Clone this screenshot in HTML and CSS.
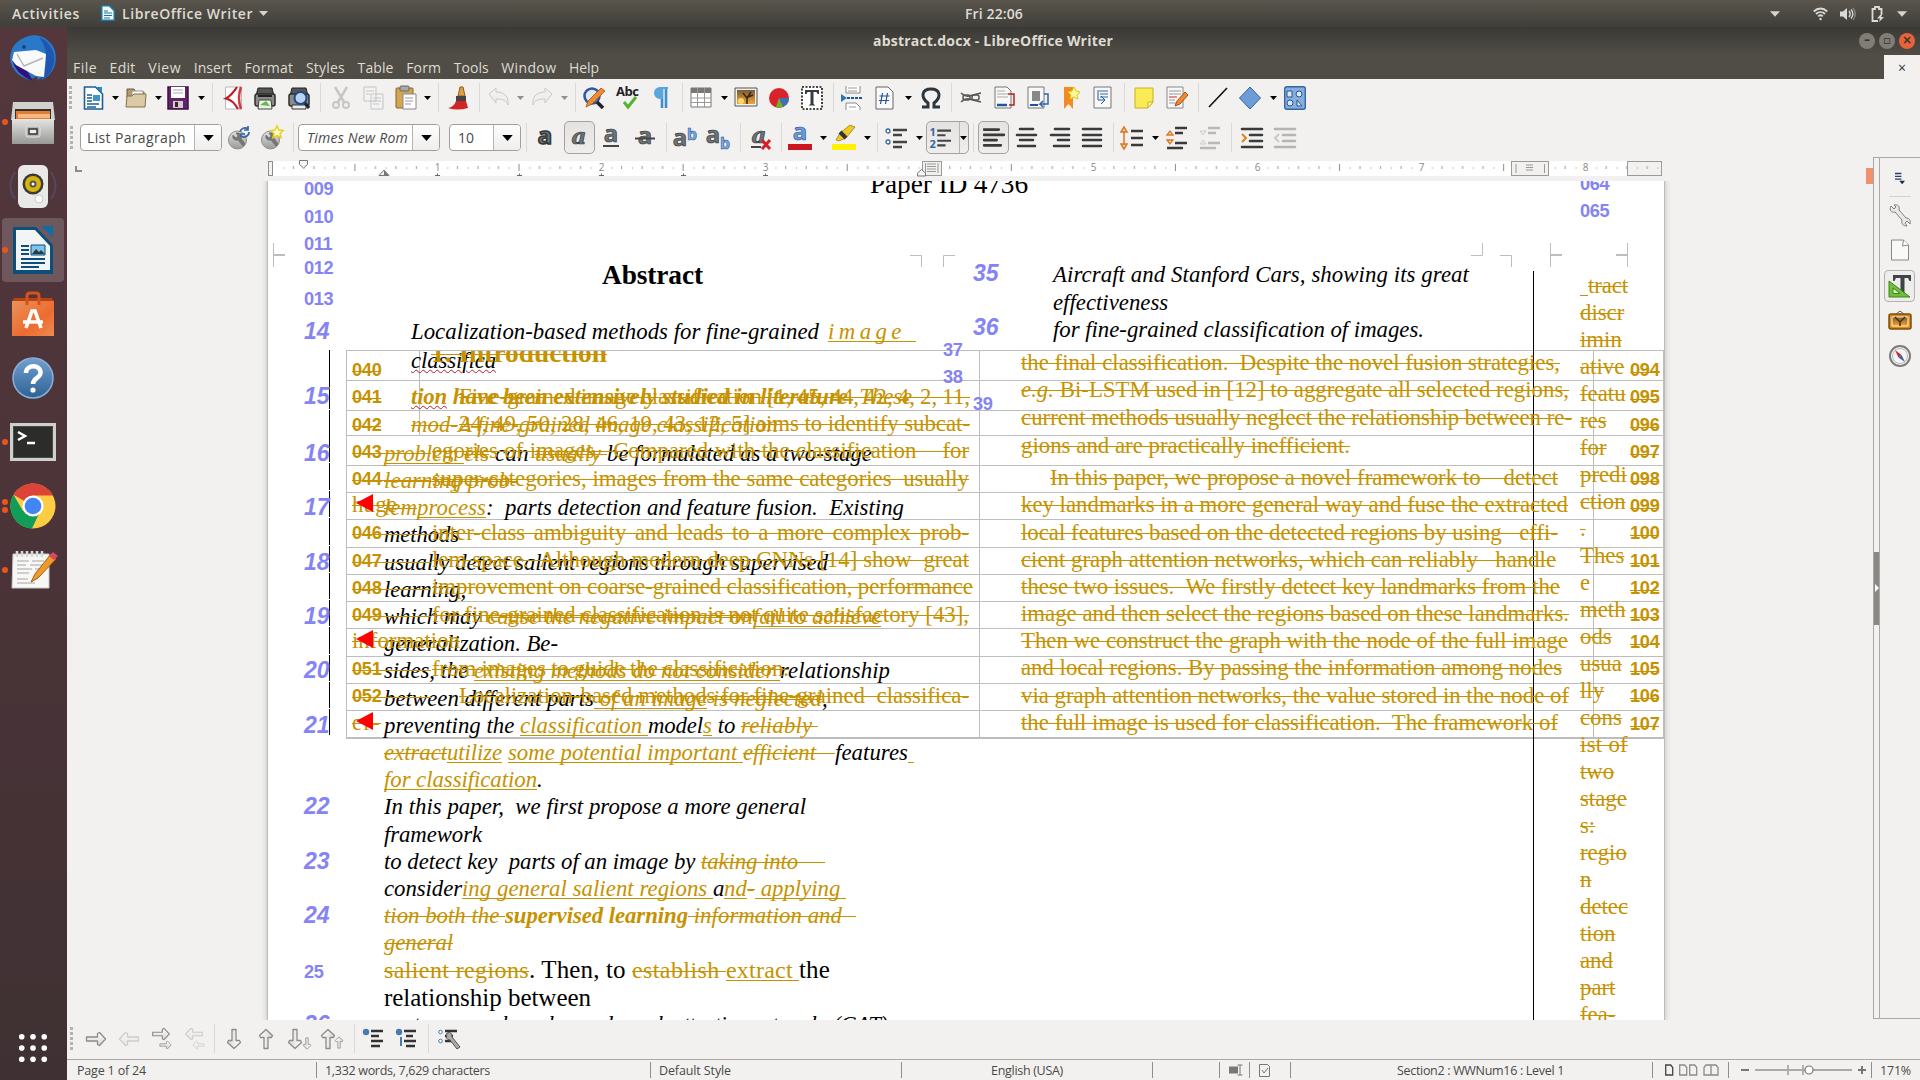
FILE: index.html
```html
<!DOCTYPE html>
<html lang="en">
<head>
<meta charset="utf-8">
<title>abstract.docx - LibreOffice Writer</title>
<link rel="stylesheet" href="styles.css">
</head>
<body>
<svg class="defs" width="0" height="0">
  <defs>
    <linearGradient id="silver" x1="0" y1="0" x2="0" y2="1"><stop offset="0" stop-color="#e4e4e2"/><stop offset="1" stop-color="#989896"/></linearGradient>
    <linearGradient id="blue" x1="0" y1="0" x2="0" y2="1"><stop offset="0" stop-color="#729fcf"/><stop offset="1" stop-color="#2d6296"/></linearGradient>
    <linearGradient id="orange" x1="0" y1="0" x2="1" y2="1"><stop offset="0" stop-color="#e8935c"/><stop offset=".6" stop-color="#ed6c2f"/><stop offset="1" stop-color="#ef8a52"/></linearGradient>
    <linearGradient id="sky" x1="0" y1="0" x2="0" y2="1"><stop offset="0" stop-color="#7a5a35"/><stop offset="1" stop-color="#f4a536"/></linearGradient>
    <linearGradient id="shaft" x1="0" y1="0" x2="0" y2="1"><stop offset="0" stop-color="#fff"/><stop offset="1" stop-color="#d5d5d2"/></linearGradient>
    <symbol id="dd" viewBox="0 0 7 4"><path d="M0 0h7L3.500 4z"/></symbol>
    <symbol id="right" viewBox="0 0 22 16"><path d="M1.500 6h11V2.500l2-1 6 6.500-6 6.500-2-1V10h-11z" fill="url(#shaft)" stroke="#8b8b89" stroke-width="1.300" stroke-linejoin="round"/></symbol>
    <symbol id="lines" viewBox="0 0 21 22"><path d="M1 3h14M1 8h19M1 13h12M1 18h16" stroke="#3a3a3a" stroke-width="2.600" stroke-linecap="round"/></symbol>
    <symbol id="stylebadge" viewBox="0 0 22 24"><circle cx="9.500" cy="14" r="9" fill="url(#silver)" stroke="#8d8d8b"/><path d="M5 9l3 3 2-2-2-3c4-1 6 2 5 5l4 6-2 2-5-6c-4 1-6-2-5-5z" fill="#777" stroke="#5c5c5c" stroke-width=".5"/></symbol>
  </defs>
</svg>

<header class="topbar">
  <span class="activities" data-w="68">Activities</span>
  <svg class="app-ico" viewBox="0 0 14 16"><path d="M0 0h9l5 5v11H0z" fill="#1579a8"/><path d="M1.500 1.500H8l4.500 4.500v8.500h-11z" fill="#f5f8fa"/><path d="M3 6h4M3 8h8M3 10.500h8M3 13h6" stroke="#1579a8" stroke-width="1.200"/></svg>
  <span class="app-name" data-w="131">LibreOffice Writer</span>
  <svg class="caret" viewBox="0 0 9 5"><path d="M0 0h9L4.500 5z" fill="#d6d4cf"/></svg>
  <span class="clock" data-w="58">Fri 22:06</span>
  <div class="tray">
    <svg width="10" height="6" viewBox="0 0 9 5"><path d="M0 0h9L4.500 5z" fill="#d6d4cf"/></svg>
    <svg class="wifi" width="15" height="14" viewBox="0 0 15 14" fill="none" stroke="#dcdad5" stroke-width="1.800"><path d="M.8 4.500c4-4 9.400-4 13.400 0M3 7c2.600-2.600 6.400-2.600 9 0M5.200 9.300c1.400-1.300 3.200-1.300 4.600 0"/><circle cx="7.500" cy="12" r="1.200" fill="#dcdad5" stroke="none"/></svg>
    <svg class="vol" width="16" height="14" viewBox="0 0 16 14"><path d="M0 4.500h3L7 1v12L3 9.500H0z" fill="#dcdad5"/><path d="M9 4c1.500 2 1.500 4 0 6M11 2.500c2.500 3 2.500 6 0 9" fill="none" stroke="#dcdad5" stroke-width="1.400"/><path d="M13 1c3 4 3 8 0 12" fill="none" stroke="#85827a" stroke-width="1.400"/></svg>
    <svg class="bat" width="14" height="16" viewBox="0 0 14 16"><path d="M7 15H1.500V3h2.500V1h4v2H10.500v5" fill="none" stroke="#dcdad5" stroke-width="1.800"/><path d="M10 8l-4 4.500h3L8 16l5-5h-3l1.500-3z" fill="#dcdad5"/></svg>
    <svg width="10" height="6" viewBox="0 0 9 5"><path d="M0 0h9L4.500 5z" fill="#d6d4cf"/></svg>
  </div>
</header>

<div class="desktop">
<nav class="dock">
  <div class="slot"><svg viewBox="0 0 48 48"><path d="M17 3C28-2 42 4 46 17c3 12-2 24-13 29l1-4-5 4-1-4-7 4c-8-2-15-7-18-14C-1 23 1 9 17 3z" fill="#2a78c8"/><path d="M30 3c13 5 19 20 13 32-2 5-6 9-12 11 7-8 10-30-1-43z" fill="#1f57b0"/><path d="M3 23c1 11 9 20 21 24l-8-14z" fill="#30127e"/><path d="M5 18l22-2 10 4-2 23-8-1-20-11-4-5z" fill="#fafafa"/><path d="M8 20l7 12 19-8" fill="none" stroke="#b6b6b6" stroke-width="1.400"/><circle cx="15" cy="13" r="1.800" fill="#123a63"/></svg></div>
  <div class="slot run"><svg viewBox="0 0 48 48"><path d="M4 4h40l2 18H2z" fill="#d0d0ce"/><path d="M6 11h36v10H6z" fill="#33302e"/><path d="M7 13h34v8H7z" fill="#e07d35"/><path d="M9 16h32v4H9z" fill="#f5b883"/><path d="M3 21h42v25H3z" fill="url(#silver)"/><rect x="17" y="28" width="14" height="11" rx="2" fill="#b6b6b4" stroke="#e5e5e3"/><rect x="20" y="31" width="8" height="5" fill="#eee" stroke="#333" stroke-width="1.500"/></svg></div>
  <div class="slot"><svg viewBox="0 0 48 48"><path d="M6 10Q-3 24 6 37M42 10q9 14 0 27" fill="none" stroke="#54485f" stroke-width="2"/><rect x="9" y="3" width="30" height="43" rx="6" fill="#e9e9e8"/><circle cx="24" cy="22" r="10.500" fill="#3c3b38"/><circle cx="24" cy="22" r="8" fill="#d7b50e"/><circle cx="24" cy="22" r="3.500" fill="#55544f"/><circle cx="24" cy="22" r="1.500" fill="#fff"/><circle cx="30" cy="37" r="4" fill="#fafafa" stroke="#ccc"/></svg></div>
  <div class="slot run active"><svg viewBox="0 0 48 48"><path d="M4 1h23l17 18v29H4z" fill="#0a5078"/><path d="M32 0h12v12z" fill="#0f6da3"/><path d="M7 4h19l15 16v24H7z" fill="#f3f4f5"/><path d="M12 20h8M12 24h8M12 28h8M12 33h24M12 37h24M12 41h18" stroke="#0c4f77" stroke-width="2.200"/><path d="M22 19h14v10H22z" fill="#7cc4ec" stroke="#0c4f77"/><path d="M23 28l4-5 3 3 2-2 4 4z" fill="#2c3c44"/></svg></div>
  <div class="slot"><svg viewBox="0 0 48 48"><path d="M5 8h38l2 4H3z" fill="#b8430f"/><path d="M3 11h42v35H3z" fill="url(#orange)"/><path d="M18 15V6q0-3 3-3h6q3 0 3 3v9" fill="none" stroke="#d8501d" stroke-width="3"/><path d="M17 38l6-17h3l6 17M14 32h20" stroke="#fff" stroke-width="3.600" fill="none"/></svg></div>
  <div class="slot"><svg viewBox="0 0 48 48"><circle cx="24" cy="24" r="20" fill="url(#blue)" stroke="#8ab0da" stroke-width="1.500"/><path d="M17 19c0-9 15-9 14.500 0C31.300 24 24 24 24 30" fill="none" stroke="#fff" stroke-width="4.500"/><circle cx="24" cy="36" r="2.600" fill="#fff"/></svg></div>
  <div class="slot run"><svg viewBox="0 0 48 48"><rect x="2.500" y="6.500" width="43" height="35" fill="#4a4a48" stroke="#cfcfcd" stroke-width="3"/><rect x="5" y="9" width="38" height="30" fill="#2c2c2a"/><path d="M9 14l7 4-7 4M18 25h8" stroke="#fff" stroke-width="2.500" fill="none"/></svg></div>
  <div class="slot run two"><svg viewBox="0 0 48 48"><circle cx="24" cy="24" r="22.500" fill="#fc4"/><path d="M24 24L4.500 12.700A22.500 22.500 0 0 1 44 13.500H24z" fill="#db4437"/><path d="M4.500 12.700A22.500 22.500 0 0 0 23 46.500l8-17L14 29z" fill="#0f9d58"/><circle cx="24" cy="24" r="10.500" fill="#fff"/><circle cx="24" cy="24" r="8.300" fill="#4285f4"/></svg></div>
  <div class="slot run"><svg viewBox="0 0 48 48"><path d="M4 8h36v34H3z" fill="#f7f7f6" stroke="#c8c8c6"/><path d="M8 5v6M13 5v6M18 5v6M23 5v6M28 5v6M33 5v6" stroke="#d9d9d9" stroke-width="2.500"/><path d="M8 15h12m3 0h12M8 19h9m4 0h14M8 23h15m3 0h8M8 27h12M8 33h11M8 37h18" stroke="#a6a6a4"/><path d="M22 36l4-8L42 8l5 5-18 19z" fill="#f09a2c" stroke="#a0601a"/><path d="M40 10l4-4 5 4-4 4z" fill="#d9485a"/></svg></div>
  <svg class="apps" viewBox="0 0 32 32" fill="#fff"><circle cx="4" cy="4" r="3"/><circle cx="16" cy="4" r="3"/><circle cx="28" cy="4" r="3"/><circle cx="4" cy="16" r="3"/><circle cx="16" cy="16" r="3"/><circle cx="28" cy="16" r="3"/><circle cx="4" cy="28" r="3"/><circle cx="16" cy="28" r="3"/><circle cx="28" cy="28" r="3"/></svg>
</nav>

<main class="window">
  <div class="titlebar">
    <span data-w="240">abstract.docx - LibreOffice Writer</span>
    <div class="wm"><i>–</i><i>▫</i><i class="close">×</i></div>
  </div>
  <div class="menubar">
    <div class="menus"><span data-w="24">File</span><span data-w="26">Edit</span><span data-w="33">View</span><span data-w="38">Insert</span><span data-w="49">Format</span><span data-w="39">Styles</span><span data-w="36">Table</span><span data-w="35">Form</span><span data-w="35">Tools</span><span data-w="55">Window</span><span data-w="30">Help</span></div>
    <span class="doc-close">×</span>
  </div>

  <div class="bar standard">
    <i class="grip"></i>
    <svg viewBox="0 0 22 24"><path d="M1.500 1h11l7 7v15h-18z" fill="#fff" stroke="#1b5f94" stroke-width="1.600"/><path d="M13 1h6v6z" fill="#2b8bc0"/><path d="M4 9h5M4 12h5M4 15h5M4 18h12M4 21h9" stroke="#1b5f94" stroke-width="1.300"/><path d="M10 9h7v6h-7z" fill="#3f95c9"/></svg>
    <svg class="dd"><use href="#dd"/></svg>
    <svg viewBox="0 0 22 24"><path d="M2 3h7l2 3h8v5H2z" fill="#b09a78" stroke="#6e5a38"/><path d="M7 5h11v6H7z" fill="#fff" stroke="#999"/><path d="M1 21l1-11h5l2-2h12l-1 13z" fill="#dcc9a6" stroke="#86704b"/></svg>
    <svg class="dd"><use href="#dd"/></svg>
    <svg viewBox="0 0 22 24"><path d="M1 1h20v22H1z" fill="#61246a" stroke="#3d1046" stroke-width="1.500"/><path d="M4 1h14v11H4z" fill="#fff"/><path d="M6 4h10M6 7h10" stroke="#aaa"/><path d="M6 15h10v7H6z" fill="#d0ccd2"/><path d="M8 16h3v5H8z" fill="#422"/></svg>
    <svg class="dd"><use href="#dd"/></svg>
    <i class="sep"></i>
    <svg viewBox="0 0 22 24"><path d="M2.500 1h16v22h-16z" fill="#fff" stroke="#b9b9b9"/><path d="M14 1Q9 9 3 12.500 10 14 15 23" fill="none" stroke="#c01c22" stroke-width="2.300"/><path d="M18 1q-4 11 0 22" fill="none" stroke="#d63940" stroke-width="2.500"/></svg>
    <svg viewBox="0 0 22 24"><path d="M4 2h14l2 8H2z" fill="#555" stroke="#222"/><rect x="1" y="8" width="20" height="12" rx="2" fill="#8b8b89" stroke="#2c2c2c" stroke-width="1.500"/><path d="M4 10h14" stroke="#222" stroke-width="2"/><path d="M5 14h12l1 9H4z" fill="#e9f5e4" stroke="#444"/><path d="M6 19l6-4 4 5z" fill="#63ba49"/></svg>
    <svg viewBox="0 0 22 24"><path d="M4 2h14l2 8H2z" fill="#555" stroke="#222"/><rect x="1" y="8" width="20" height="12" rx="2" fill="#8b8b89" stroke="#2c2c2c" stroke-width="1.500"/><path d="M4 19h14v4H4z" fill="#eee" stroke="#333"/><circle cx="12.500" cy="12" r="6" fill="#b8d4f0" stroke="#204a87" stroke-width="2"/><path d="M17 17l4 5" stroke="#223" stroke-width="3"/></svg>
    <i class="sep"></i>
    <svg viewBox="0 0 22 24" opacity=".4"><path d="M4 1l9 15M16 1L7 16" stroke="#888" stroke-width="2.500"/><circle cx="5" cy="19" r="3" fill="none" stroke="#888" stroke-width="2"/><circle cx="15" cy="19" r="3" fill="none" stroke="#888" stroke-width="2"/></svg>
    <svg viewBox="0 0 22 24" opacity=".5"><path d="M1 1h12v14H1zM8 8h12v15H8z" fill="#f6f6f6" stroke="#999"/><path d="M3 5h8M3 8h4M10 12h8M10 15h8M10 18h6" stroke="#999"/></svg>
    <svg viewBox="0 0 22 24"><rect x="1" y="2" width="17" height="20" rx="1" fill="#d6a554" stroke="#8a6220"/><rect x="5" y="0" width="9" height="5" rx="1" fill="#aaa" stroke="#666"/><path d="M8 8h13v15H8z" fill="#fff" stroke="#888"/><path d="M10 12h8M10 15h8M10 18h6" stroke="#999"/></svg>
    <svg class="dd"><use href="#dd"/></svg>
    <i class="sep"></i>
    <svg viewBox="0 0 22 24"><path d="M13 1h3l2 9h-7z" fill="#dda047" stroke="#8d5c1a"/><path d="M9 10h10v5H9z" fill="#444"/><path d="M9 15h10l2 7Q10 25 1 22q6-1 8-7z" fill="#d02525"/></svg>
    <i class="sep"></i>
    <svg viewBox="0 0 22 24" opacity=".45"><path d="M1 8l7-6v4c8 0 13 4 12 13-2-5-5-6-12-6v4z" fill="#eee" stroke="#999"/></svg>
    <svg class="dd dim"><use href="#dd"/></svg>
    <svg viewBox="0 0 22 24" opacity=".45"><path d="M21 8l-7-6v4C6 6 1 10 2 19c2-5 5-6 12-6v4z" fill="#eee" stroke="#999"/></svg>
    <svg class="dd dim"><use href="#dd"/></svg>
    <i class="sep"></i>
    <svg viewBox="0 0 22 24"><circle cx="9" cy="10" r="7.500" fill="#dfe9f5" stroke="#2c59a0" stroke-width="2.600"/><path d="M14 16l6 6" stroke="#222" stroke-width="3.500"/><path d="M3 21l2-6L18 2l4 3L9 18z" fill="#ee8b30" stroke="#a45010" stroke-width=".8"/></svg>
    <svg viewBox="0 0 22 24"><text x="-1" y="10" class="abc" textLength="23">Abc</text><path d="M7 16l4 5 8-10" fill="none" stroke="#52b52f" stroke-width="3"/></svg>
    <svg viewBox="0 0 22 24"><path d="M15 3v19M11 3v19" stroke="#3e8ecb" stroke-width="2.600"/><path d="M17 1H9a5.500 5.500 0 0 0 0 12h3V3h5z" fill="#5aa5dc"/></svg>
    <i class="sep"></i>
    <svg viewBox="0 0 22 24"><path d="M1 2h20v19H1z" fill="#fff" stroke="#777"/><path d="M1 2h20v5H1z" fill="#777"/><path d="M1 12h20M1 16.500h20M7.500 2v19M14.500 2v19" stroke="#999"/></svg>
    <svg class="dd"><use href="#dd"/></svg>
    <svg viewBox="0 0 22 24"><path d="M0 2h22v18H0z" fill="#f2f2f0" stroke="#555"/><path d="M2 4h18v14H2z" fill="url(#sky)"/><circle cx="6" cy="15" r="3" fill="#ffd969"/><path d="M12 18v-6l-4-5m4 5l4-6m-3 5l5-2" fill="none" stroke="#33261a" stroke-width="1.500"/></svg>
    <svg viewBox="0 0 22 24"><circle cx="11" cy="12" r="10" fill="#d8232a"/><path d="M11 12h10a10 10 0 0 1-6 9z" fill="#3a72b8"/><path d="M11 12l4 9a10 10 0 0 1-7 0z" fill="#6cb52d"/></svg>
    <svg viewBox="0 0 22 24"><path d="M1 1h20v22H1z" fill="#fff" stroke="#111" stroke-width="1.600" stroke-dasharray="2 1.500"/><path d="M4 4h14v4h-1.500l-1-2H12.500v12l2 1.500H7.500l2-1.500V6h-3l-1 2H4z" fill="#333b44"/></svg>
    <i class="sep"></i>
    <svg viewBox="0 0 22 24"><path d="M5 0v7h14V0M5 24v-7h10l4 4v3" fill="#fff" stroke="#8a8a8a"/><path d="M7 2h9M7 5h9M8 21h7" stroke="#999"/><path d="M6 12h16" stroke="#1f559c" stroke-width="2" stroke-dasharray="3 1"/><path d="M0 8l6 4-6 4z" fill="#3473b5"/></svg>
    <svg viewBox="0 0 22 24"><path d="M2 1h12l5 5v17H2z" fill="#fafafa" stroke="#666"/><path d="M8.500 7l-2 11M13.500 7l-2 11M5.500 10h10M5 14.500h10" stroke="#1f559c" stroke-width="1.200"/></svg>
    <svg class="dd"><use href="#dd"/></svg>
    <svg viewBox="0 0 22 24"><path d="M2 21h6v-4C0 11 2 3 11 3s11 8 3 14v4h6" fill="none" stroke="#2d363c" stroke-width="3"/></svg>
    <i class="sep"></i>
    <svg viewBox="0 0 22 24"><path d="M1 7q4 4 8 3t12-3M1 16q4-4 8-3t12 3" stroke="#555" stroke-width="1.500" fill="none"/><rect x="3" y="9" width="7" height="5" rx="2" fill="none" stroke="#555" stroke-width="1.500"/><rect x="12" y="9" width="7" height="5" rx="2" fill="none" stroke="#555" stroke-width="1.500"/></svg>
    <svg viewBox="0 0 22 24"><path d="M1 1h12l4 4v17H1z" fill="#f8f8f8" stroke="#777"/><path d="M3 5h8M3 8h11M3 11h11" stroke="#aaa"/><path d="M3 19h10" stroke="#1f559c" stroke-width="2.500"/><path d="M14 8h6v11h-5" fill="none" stroke="#b32121" stroke-width="1.500"/></svg>
    <svg viewBox="0 0 22 24"><path d="M1 1h16v21H1z" fill="#f8f8f8" stroke="#777"/><path d="M5 5h8v10H5z" fill="#888"/><path d="M17 8h4v10h-8l3-3m-3 3l3 3" fill="none" stroke="#3167a8" stroke-width="1.500"/><path d="M3 19h8" stroke="#1f559c" stroke-width="2"/></svg>
    <svg viewBox="0 0 22 24"><path d="M3 1h9v22l-4.500-5L3 23z" fill="#f38b24"/><path d="M13 1l2 4 4 1-3 3 1 4-4-2-4 2 1-4-3-3 4-1z" fill="#fff7a0" stroke="#e2c800"/></svg>
    <svg viewBox="0 0 22 24"><path d="M2 1h17v21H2z" fill="#f8f8f8" stroke="#777"/><path d="M5 5h11M8 8h8M8 11h8" stroke="#3167a8"/><path d="M6 6v8h6m-3 4l4-4-4-4" fill="none" stroke="#1f559c"/></svg>
    <i class="sep"></i>
    <svg viewBox="0 0 22 24"><path d="M2 2h18v14l-5 6H2z" fill="#f9ea58" stroke="#c9b21a"/><path d="M20 16h-5v6z" fill="#fffbc0" stroke="#c9b21a"/></svg>
    <svg viewBox="0 0 22 24"><path d="M1 1h16v21H1z" fill="#f8f8f8" stroke="#888"/><path d="M3 5h12M3 8h12M3 14h6M3 17h8" stroke="#999"/><path d="M3 11h8" stroke="#c22"/><path d="M9 20l2-5 8-9 3 3-8 9z" fill="#ee8b30" stroke="#a45010"/></svg>
    <i class="sep"></i>
    <svg viewBox="0 0 22 24"><path d="M2 21L20 2" stroke="#111" stroke-width="1.600"/></svg>
    <svg viewBox="0 0 22 24"><path d="M11 1l10.500 11L11 23 .5 12z" fill="#6d9dd6" stroke="#3465a4"/></svg>
    <svg class="dd"><use href="#dd"/></svg>
    <svg viewBox="0 0 22 24"><rect x=".7" y=".7" width="20.600" height="22.600" rx="2" fill="#86aedd" stroke="#3465a4" stroke-width="1.400"/><path d="M3 5h5v6H3zM13 14v6h5z" fill="#dbe8f7" stroke="#2a5590"/><circle cx="15" cy="8" r="3" fill="#dbe8f7" stroke="#2a5590"/><circle cx="6" cy="17" r="3" fill="#dbe8f7" stroke="#2a5590"/></svg>
  </div>

  <div class="bar format">
    <i class="grip"></i>
    <div class="combo style"><span data-w="99">List Paragraph</span><b><svg class="arrow"><use href="#dd"/></svg></b></div>
    <svg viewBox="0 0 22 24"><use href="#stylebadge"/><path d="M12 6a5 5 0 0 1 8-3m1 3a5 5 0 0 1-8 4M20 0v4h-4M13 11V8h4" fill="none" stroke="#3465a4" stroke-width="1.700"/></svg>
    <svg viewBox="0 0 22 24"><use href="#stylebadge"/><path d="M16 0l2 4 4 .5-3 3 1 4-4-2-4 2 1-4-3-3 4-.5z" fill="#fffad0" stroke="#e8d21c" stroke-width="1.500"/></svg>
    <i class="sep"></i>
    <div class="combo font"><span class="it" data-w="101">Times New Rom</span><b><svg class="arrow"><use href="#dd"/></svg></b></div>
    <div class="combo size"><span data-w="16">10</span><b><svg class="arrow"><use href="#dd"/></svg></b></div>
    <i class="sep"></i>
    <svg viewBox="0 0 22 24"><text x="10" y="18" class="ga heavy">a</text></svg>
    <div class="tbtn"><svg viewBox="0 0 22 24"><text x="10" y="18" class="ga ita">a</text></svg></div>
    <svg viewBox="0 0 22 24"><text x="9" y="16" class="ga">a</text><path d="M1 20h16" stroke="#444" stroke-width="2"/></svg>
    <svg viewBox="0 0 22 24"><text x="10" y="18" class="ga">a</text><path d="M0 12.500h20" stroke="#444" stroke-width="2"/></svg>
    <i class="sep"></i>
    <svg viewBox="0 0 22 24"><text x="6" y="20" class="ga">a</text><text x="18" y="14" class="gb">b</text></svg>
    <svg viewBox="0 0 22 24"><text x="6" y="17" class="ga">a</text><text x="18" y="23" class="gb">b</text></svg>
    <i class="sep"></i>
    <svg viewBox="0 0 22 24"><text x="9" y="17" class="ga ita">a</text><path d="M1 21h10" stroke="#444" stroke-width="2"/><path d="M12 14l8 9m0-9l-8 9" stroke="#d61f2a" stroke-width="3"/></svg>
    <i class="sep"></i>
    <svg viewBox="0 0 22 24"><text x="11" y="14" class="ga bl">a</text><path d="M-1 18h24v6H-1z" fill="#cd1421"/></svg>
    <svg class="dd"><use href="#dd"/></svg>
    <svg viewBox="0 0 22 24"><path d="M3 14l4-7L17-1l5 2-9 11-7 3z" fill="#edc928" stroke="#907413" stroke-width=".7"/><path d="M7 6l6 6" stroke="#333" stroke-width="4"/><path d="M-1 18h24v6H-1z" fill="#fff200"/></svg>
    <svg class="dd"><use href="#dd"/></svg>
    <i class="sep"></i>
    <svg viewBox="0 0 22 24"><path d="M8 5h14M8 10h9M8 17h14M8 22h9" transform="translate(0 -1)" stroke="#444" stroke-width="2.300"/><circle cx="3" cy="5" r="2" fill="#fff" stroke="#3465a4" stroke-width="1.300"/><circle cx="3" cy="16" r="2" fill="#fff" stroke="#3465a4" stroke-width="1.300"/></svg>
    <svg class="dd"><use href="#dd"/></svg>
    <div class="tbtn wide"><svg viewBox="0 0 24 24"><text x="4" y="10" class="n">1</text><text x="4" y="23" class="n">2</text><path d="M9 4h15M9 9h9M9 15h15M9 20h9" stroke="#444" stroke-width="2.300"/></svg><b><svg class="dd"><use href="#dd"/></svg></b></div>
    <i class="sep"></i>
    <div class="tbtn"><svg viewBox="0 0 21 22"><use href="#lines"/></svg></div>
    <svg viewBox="0 0 22 24"><path d="M4 3h13M1 9h19M4 14h13M2 20h17" stroke="#3a3a3a" stroke-width="2.600" stroke-linecap="round"/></svg>
    <svg viewBox="0 0 22 24"><path d="M6 3h14M2 9h18M9 14h11M5 20h15" stroke="#3a3a3a" stroke-width="2.600" stroke-linecap="round"/></svg>
    <svg viewBox="0 0 22 24"><path d="M2 3h18M2 9h18M2 14h18M2 20h18" stroke="#3a3a3a" stroke-width="2.600" stroke-linecap="round"/></svg>
    <i class="sep"></i>
    <svg viewBox="0 0 22 24"><path d="M3 5v14M0 6l3-5 3 5zM0 18l3 5 3-5z" stroke="#d87a26" stroke-width="1.500" fill="#fbd9a8"/><path d="M10 5h12M10 12h12M10 19h12" stroke="#3a3a3a" stroke-width="2.600"/></svg>
    <svg class="dd"><use href="#dd"/></svg>
    <svg viewBox="0 0 22 24"><path d="M9 2h12M9 7h8M9 17h12M1 22h16" stroke="#3a3a3a" stroke-width="2.400"/><path d="M1 9l3-4 3 4zM1 14l3 4 3-4z" fill="#fbd9a8" stroke="#d87a26" stroke-width="1.300"/></svg>
    <svg viewBox="0 0 22 24" opacity=".3"><path d="M9 2h12M9 7h8M9 17h12M1 22h16" stroke="#3a3a3a" stroke-width="2.400"/><path d="M1 5l3 4 3-4zM1 18l3-4 3 4z" fill="#eee" stroke="#777"/></svg>
    <i class="sep"></i>
    <svg viewBox="0 0 22 24"><path d="M1 3h20M9 9h12M9 15h12M1 21h20" stroke="#3a3a3a" stroke-width="2.600" stroke-linecap="round"/><path d="M1 8l4 4-4 4" fill="none" stroke="#e2811f" stroke-width="2"/></svg>
    <svg viewBox="0 0 22 24" opacity=".32"><path d="M1 3h20M9 9h12M9 15h12M1 21h20" stroke="#3a3a3a" stroke-width="2.600" stroke-linecap="round"/><path d="M5 8l-4 4 4 4" fill="none" stroke="#777" stroke-width="2"/></svg>
  </div>

  <div class="work">
    <div class="editor">
      <div class="ruler">
        <svg viewBox="67 157 1806 24" width="1806" height="24">
          <defs><pattern id="ticks" x="437" y="161" width="164.100" height="15" patternUnits="userSpaceOnUse">
            <path d="M10.300 7h1M30.800 7h1M51.300 7h1M71.800 7h1M92.300 7h1M112.800 7h1M133.300 7h1M153.800 7h1" stroke="#8a8a88"/>
            <path d="M20.500 5v3M41 5v3M61.500 5v3M102.500 5v3M123 5v3M143.500 5v3" stroke="#9a9a98"/><path d="M82 3v7" stroke="#8a8a88"/></pattern></defs>
          <rect x="268" y="161" width="1360" height="15" fill="#fff"/>
          <rect x="275" y="161" width="1387" height="15" fill="url(#ticks)"/>
          <rect x="268.500" y="161.500" width="4" height="14" fill="#f2f1f0" stroke="#8c8c8a"/>
          <rect x="922.500" y="161.500" width="19" height="14" fill="#f2f1f0" stroke="#9a9a98"/><path d="M927 164h9M927 166.500h9M927 169h9M927 171.500h9M925.500 163v10M938 163v10" stroke="#999"/>
          <rect x="1511.500" y="161.500" width="37" height="14" fill="#f2f1f0" stroke="#9a9a98"/><path d="M1526 165h7M1526 167.500h7M1526 170h7M1516 164v9M1544.500 164v9" stroke="#999"/>
          <rect x="1627.500" y="161.500" width="34" height="14" fill="none" stroke="#9a9a98"/>
          <g fill="#fff"><path d="M433 163h9v9h-9zM597 163h9v9h-9zM761 163h9v9h-9zM1089 163h9v9h-9zM1253 163h9v9h-9zM1417 163h9v9h-9zM1581 163h9v9h-9z"/></g>
          <g class="rnum"><text x="437.500" y="171">1</text><text x="601.500" y="171">2</text><text x="765.500" y="171">3</text><text x="1093.500" y="171">5</text><text x="1257.500" y="171">6</text><text x="1421.500" y="171">7</text><text x="1585.500" y="171">8</text></g>
          <path d="M435 175.500h5m-2.500-2v2M517 175.500h5m-2.500-2v2M599 175.500h5m-2.500-2v2M681 175.500h5m-2.500-2v2M763 175.500h5m-2.500-2v2" stroke="#666"/>
          <path d="M299.500 160.500h8v4l-4 3.500-4-3.500z" fill="#f6f6f5" stroke="#777"/>
          <path d="M384 170l5 5.500h-10z" fill="#eee" stroke="#777"/><path d="M384 170l5 5.500h-5z" fill="#777"/>
          <path d="M921.500 169.500l4 3.500v3h-8v-3z" fill="#f6f6f5" stroke="#777"/>
          <path d="M76 166v5h6" fill="none" stroke="#8c8c8a" stroke-width="2"/>
        </svg>
      </div>
      <div class="canvas">
        <div class="page">
          <!-- cell borders of the struck-out table -->
          <div class="cells"><i></i><i></i><i></i><i></i><i></i><i></i><i></i><i></i><i></i><i></i><i></i><i></i><i></i><i></i></div>
          <svg class="marks" viewBox="268 181 1396 839"><g fill="none" stroke="#bdbdbd">
            <path d="M273.500 243v24M921.500 267v-11.500H910M943.500 267v-11.500H955M1482.500 243v12.500H1471M1500 255.500h11.500V267M1550.500 243v24M1627.500 243v24"/>
            <path d="M273 255h12M1550 255h12M1616 255h12" stroke-width="2"/>
            <path d="M419.500 350v85M979.500 350v387M1593.500 350v387"/></g>
          </svg>
          <div class="bars"><i></i><i></i><i></i><i></i><i></i><i></i><i></i><i></i><i></i><i></i><i></i><i></i><i></i></div>
          <i class="column-line"></i>

          <div class="layer paper"><span data-w="158">Paper ID 4736</span></div>
          <div class="layer heads lno"><div>009</div><div>010</div><div>011</div><div>012</div><div>013</div></div>
          <div class="layer title"><b data-w="101">Abstract</b></div>

          <div class="layer body">
            <div class="row in"><em class="lno">14</em><p><span data-w="408">Localization-based methods for fine-grained</span><span class="gap"></span><ins class="spaced" data-w="88">image </ins></p></div>
            <div class="row in r2"><em></em><p><span class="wavy" data-w="85">classifica</span></p></div>
            <div class="row in r3"><em class="lno">15</em><p><b class="au wavy" data-w="36">tion</b><b class="au" data-w="401"> have been extensively studied in literature</b><del data-w="64">. These</del></p></div>
            <div class="row in r4"><em></em><p><del data-w="47">mod-</del><span class="au" data-w="320">A fine-grained image classification</span></p></div>
            <div class="row r5"><em class="lno">16</em><p><ins data-w="80">problem </ins><del data-w="25">els</del><span data-w="46"> can </span><del data-w="72">usually </del><span data-w="265">be formulated as a two-stage</span></p></div>
            <div class="row"><em></em><p><del data-w="134">learning prob-</del></p></div>
            <div class="row"><em class="lno">17</em><p><del data-w="33">lem</del><ins data-w="69">process</ins><span data-w="418">:  parts detection and feature fusion.  Existing</span></p></div>
            <div class="row"><em></em><p><span data-w="75">methods</span></p></div>
            <div class="row"><em class="lno">18</em><p><span data-w="444">usually detect salient regions through supervised</span></p></div>
            <div class="row"><em></em><p><span data-w="82">learning,</span></p></div>
            <div class="row"><em class="lno">19</em><p><span data-w="103">which may </span><del data-w="266">cause the negative impact on</del><ins data-w="128">fail to achieve</ins></p></div>
            <div class="row"><em></em><p><span data-w="174">generalization. Be-</span></p></div>
            <div class="row"><em class="lno">20</em><p><span data-w="90">sides, the </span><ins data-w="306">existing methods do not consider </ins><span data-w="110">relationship</span></p></div>
            <div class="row"><em></em><p><span data-w="210">between different parts</span><ins data-w="113"> of an image</ins><del data-w="115"> is neglected</del><span>,</span></p></div>
            <div class="row"><em class="lno">21</em><p><span data-w="136">preventing the </span><ins data-w="128">classification </ins><span data-w="55">model</span><ins data-w="9">s</ins><span data-w="29"> to </span><del data-w="77">reliably </del></p></div>
            <div class="row"><em></em><p><del data-w="63">extract</del><ins data-w="55">utilize</ins><span data-w="6"> </span><ins data-w="235">some potential important </ins><del data-w="73">efficient</del><del data-w="19">   </del><span data-w="73">features</span><ins data-w="6"> </ins></p></div>
            <div class="row"><em></em><p><ins data-w="153">for classification</ins><span>.</span></p></div>
            <div class="row"><em class="lno">22</em><p><span data-w="422">In this paper,  we first propose a more general</span></p></div>
            <div class="row"><em></em><p><span data-w="98">framework</span></p></div>
            <div class="row"><em class="lno">23</em><p><span data-w="317">to detect key  parts of an image by </span><del data-w="97">taking into</del><del data-w="27">    </del></p></div>
            <div class="row"><em></em><p><span data-w="78">consider</span><ins data-w="251">ing general salient regions </ins><span data-w="11">a</span><ins data-w="23">nd</ins><del data-w="8">-</del><ins data-w="91"> applying </ins></p></div>
            <div class="row"><em class="lno">24</em><p><del data-w="121">tion both the </del><b class="au" data-w="183">supervised learning</b><del data-w="154"> information and</del><del data-w="14">  </del></p></div>
            <div class="row"><em></em><p><del data-w="69">general</del></p></div>
            <div class="row up"><em class="lno sm">25</em><p><del data-w="145">salient regions</del><span data-w="103">. Then, to </span><del data-w="94">establish </del><ins data-w="73">extract </ins><span data-w="31">the</span></p></div>
            <div class="row up"><em></em><p><span data-w="207">relationship between</span></p></div>
            <div class="row"><em class="lno">26</em><p><span data-w="503">parts, we employ a learned graph attention networks (GAT)</span></p></div>
          </div>

          <div class="layer intro"><del data-w="176">1. Introduction</del></div>
          <div class="layer tno">
            <div><s>040</s></div><div><s>041</s></div><div><s>042</s></div><div><s class="x">043</s></div><div><s class="x">044</s></div>
            <div><del class="big" data-w="45">huge</del><svg viewBox="0 0 18 18"><path d="M0 9L17 0v18z"/></svg></div>
            <div><s class="x">046</s></div><div><s class="x">047</s></div><div><s class="x">048</s></div><div><s class="x">049</s></div>
            <div><del class="big" data-w="108">information</del><svg viewBox="0 0 18 18"><path d="M0 9L17 0v18z"/></svg></div>
            <div><s class="x">051</s></div><div><s class="x">052</s></div>
            <div><del class="big" data-w="29">er-</del><svg viewBox="0 0 18 18"><path d="M0 9L17 0v18z"/></svg></div>
          </div>
          <div class="layer tleft">
            <div class="ind"><del class="j" data-w="511">Fine-grained image classification [1, 45, 44, 42, 4, 2, 11,</del></div>
            <div class="ind"><del class="j" data-w="511">24, 49, 50, 28, 46, 19, 43, 12, 5] aims to identify subcat-</del></div>
            <div><del class="j" data-w="537">egories of images.  Compared with the classification    for</del></div>
            <div><del class="j" data-w="537">super-categories, images from the same categories  usually</del></div>
            <div></div>
            <div><del class="j" data-w="537">inter-class ambiguity and leads to a more complex prob-</del></div>
            <div><del class="j" data-w="537">lem space.  Although modern deep CNNs [14] show  great</del></div>
            <div><del class="j" data-w="541">improvement on coarse-grained classification, performance</del></div>
            <div><del class="j" data-w="537">for fine-grained classification is not quite satisfactory [43],</del></div>
            <div></div>
            <div><del class="j" data-w="357">from images to guide the classification.</del></div>
            <div class="ind"><del class="j" data-w="510">Localization-based methods for fine-grained  classifica-</del></div>
          </div>
          <div class="layer tright">
            <div><del data-w="539">the final classification.  Despite the novel fusion strategies,</del></div>
            <div><del data-w="548"><em>e.g.</em> Bi-LSTM used in [12] to aggregate all selected regions,</del></div>
            <div><del data-w="551">current methods usually neglect the relationship between re-</del></div>
            <div><del data-w="329">gions and are practically inefficient.</del></div>
            <div class="para"><del class="j" data-w="508">In this paper, we propose a novel framework to    detect</del></div>
            <div><del data-w="547">key landmarks in a more general way and fuse the extracted</del></div>
            <div><del class="j" data-w="537">local features based on the detected regions by using   effi-</del></div>
            <div><del class="j" data-w="535">cient graph attention networks, which can reliably   handle</del></div>
            <div><del data-w="539">these two issues.  We firstly detect key landmarks from the</del></div>
            <div><del data-w="548">image and then select the regions based on these landmarks.</del></div>
            <div><del data-w="547">Then we construct the graph with the node of the full image</del></div>
            <div><del data-w="541">and local regions. By passing the information among nodes</del></div>
            <div><del data-w="548">via graph attention networks, the value stored in the node of</del></div>
            <div><del data-w="537">the full image is used for classification.  The framework of</del></div>
          </div>
          <div class="layer rno"><s>094</s><s>095</s><s>096</s><s>097</s><s>098</s><s>099</s><s>100</s><s>101</s><s>102</s><s>103</s><s>104</s><s>105</s><s>106</s><s>107</s></div>

          <div class="layer c35"><em class="lno">35</em><em class="lno">36</em></div>
          <div class="layer c37 lno"><span>37</span><span>38</span><span class="out">39</span></div>
          <div class="layer air"><div data-w="416">Aircraft and Stanford Cars, showing its great</div><div>effectiveness</div><div data-w="371">for fine-grained classification of images.</div></div>
          <div class="layer c64 lno"><span>064</span><span>065</span></div>
          <div class="layer narrow">
            <div><ins data-w="8"> </ins><del data-w="40">tract</del></div><div><del>discr</del></div><div><del>imin</del></div><div><del>ative</del></div><div><del>featu</del></div><div><del>res</del></div><div><del>for</del></div><div><del>predi</del></div><div><del>ction</del></div><div><del>.</del></div><div><del>Thes</del></div><div><span class="au">e</span></div><div><del>meth</del></div><div><del>ods</del></div><div><del>usua</del></div><div><del>lly</del></div><div><del>cons</del></div><div><del data-w="48">ist of</del></div><div><del>two</del></div><div><del>stage</del></div><div><del>s:</del></div><div><del>regio</del></div><div><del>n</del></div><div><del>detec</del></div><div><del>tion</del></div><div><del>and</del></div><div><del>part</del></div><div><del>fea-</del></div>
          </div>
        </div>
      </div>
    </div>
    <aside class="side">
      <div class="split"><b><svg width="4" height="8" viewBox="0 0 4 8"><path d="M0 0l4 4-4 4z" fill="#fff"/></svg></b></div>
      <div class="tabs">
        <svg class="t1" width="10" height="13" viewBox="0 0 14 18"><path d="M0 2h9M0 6h9M0 10h9" stroke="#2b3f66" stroke-width="1.800"/><path d="M6 12h8l-4 5z" fill="#1c2b4a"/></svg>
        <hr>
        <svg class="t2" width="22" height="22" viewBox="0 0 22 22"><path d="M2 1l3 3 2-2-2-2c4-1 6 2 5 5l7 8c3 0 5 2 4 6l-3-3-2 2 2 3c-4 0-6-2-5-6l-7-8C2 8 0 5 2 1z" fill="#e8e8e6" stroke="#7d7d7b"/></svg>
        <svg class="t3" width="20" height="22" viewBox="0 0 20 22"><path d="M1.500 1h12l5 5v15h-17z" fill="#f9f9f8" stroke="#888"/><path d="M13.500 1l-1 6 6-1" fill="#fff" stroke="#888"/></svg>
        <div class="tab-on"><svg width="24" height="24" viewBox="0 0 24 24"><path d="M5 1h18v6h-1.500L20 4h-3.500v15l2.500 2h-9l2.500-2V4H8L6.500 7H5z" fill="#3c4448"/><path d="M1 7l21 16H1z" fill="#6fbf3a" stroke="#3d861a"/><path d="M5 14l7 5.500H5z" fill="#e6f3dc" stroke="#3d861a"/></svg></div>
        <svg class="t5" width="24" height="20" viewBox="0 0 24 20"><path d="M7 5l5-4 5 4" fill="none" stroke="#555"/><rect x="1" y="4" width="22" height="15" rx="2" fill="#d98d1f" stroke="#7b4c0c" stroke-width="1.500"/><path d="M4 7h16v9H4z" fill="url(#sky)" stroke="#fff0c8"/><path d="M7 7l5 5v4m0-4l5-5" stroke="#4b2f10" stroke-width="1.500" fill="none"/></svg>
        <svg class="t6" width="24" height="24" viewBox="0 0 24 24"><circle cx="12" cy="12" r="10" fill="#f4f4f4" stroke="#7c7c7c" stroke-width="2"/><circle cx="12" cy="12" r="7.500" fill="none" stroke="#bbb"/><path d="M7 6l6.500 5-3 2.500z" fill="#cc2436"/><path d="M17 18l-6.500-4.500 3-2.500z" fill="#3a5f9a"/></svg>
      </div>
    </aside>
  </div>

  <div class="bar nav">
    <i class="grip"></i>
    <svg viewBox="0 0 22 22"><use href="#right" y="3" height="16" width="22"/></svg>
    <svg viewBox="0 0 22 22" opacity=".35"><use href="#right" y="3" height="16" width="22" transform="matrix(-1 0 0 1 22 0)"/></svg>
    <svg viewBox="0 0 22 22"><use href="#right" y="-1" height="14" width="22"/><use href="#right" x="9" y="12" height="10" width="13"/></svg>
    <svg viewBox="0 0 22 22" opacity=".35"><g transform="matrix(-1 0 0 1 22 0)"><use href="#right" y="-1" height="14" width="22"/><use href="#right" x="0" y="12" height="10" width="13"/></g></svg>
    <i class="sep"></i>
    <svg viewBox="0 0 22 22"><use href="#right" y="3" height="16" width="22" transform="rotate(90 11 11)"/></svg>
    <svg viewBox="0 0 22 22"><use href="#right" y="3" height="16" width="22" transform="rotate(-90 11 11)"/></svg>
    <svg viewBox="0 0 22 22"><g transform="rotate(90 11 11)"><use href="#right" y="8" height="16" width="22"/><use href="#right" x="9" y="-1" height="10" width="13"/></g></svg>
    <svg viewBox="0 0 22 22"><g transform="rotate(-90 11 11)"><use href="#right" y="-2" height="16" width="22"/><use href="#right" x="1" y="12" height="10" width="13"/></g></svg>
    <i class="sep"></i>
    <svg viewBox="0 0 22 22"><path d="M9 3h12M9 8h8M9 13h12M9 18h9" stroke="#333" stroke-width="2.600"/><circle cx="4" cy="4" r="3.200" fill="#4a78b0"/></svg>
    <svg viewBox="0 0 22 22"><path d="M9 3h12M11 8h7M9 13h12M11 18h9" stroke="#333" stroke-width="2.600"/><circle cx="4" cy="4" r="3.200" fill="#4a78b0"/><path d="M6 9v9" stroke="#4a78b0" stroke-width="2"/></svg>
    <i class="sep"></i>
    <svg viewBox="0 0 22 22"><path d="M7 3h12M7 8h8M7 13h9" stroke="#333" stroke-width="2.500"/><circle cx="2.500" cy="4" r="1.800" fill="#fff" stroke="#4a78b0"/><circle cx="2.500" cy="13" r="1.800" fill="#fff" stroke="#4a78b0"/><path d="M9 5q5-2 5 4l8 10-3 2-7-9q-5 0-3-7z" fill="#aaa" stroke="#555"/></svg>
  </div>

  <footer class="status">
    <div><span data-w="69">Page 1 of 24</span></div>
    <div><span data-w="165">1,332 words, 7,629 characters</span></div>
    <div><span data-w="72">Default Style</span></div>
    <div class="mid lang"><span data-w="72">English (USA)</span></div>
    <div></div>
    <div><svg width="14" height="10" viewBox="0 0 14 10"><path d="M0 1.500h9v7H0z" fill="#777"/><path d="M11 0v10M13.500 0h-5M13.500 10h-5" stroke="#777"/></svg></div>
    <div><svg width="12" height="13" viewBox="0 0 12 13"><path d="M.5.500h8l2 2v10h-10z" fill="none" stroke="#777"/><path d="M3 6l2 3 4-5" fill="none" stroke="#777"/></svg></div>
    <div class="mid sect"><span data-w="167">Section2 : WWNum16 : Level 1</span></div>
    <div><svg width="56" height="12" viewBox="0 0 56 12" fill="none" stroke="#8b8b89" stroke-width="1.300"><path d="M.7 1h5l2 2.500V11h-7z" stroke="#444"/><path d="M14.700 1h5l2 2.500V11h-7zM24.700 1h5l2 2.500V11h-7zM46 1h5l2 2.500V11h-7zM46 1h-5l-2 2.500V11h7"/></svg></div>
    <div><svg width="126" height="14" viewBox="0 0 126 14"><path d="M0 7h8M117 7h8M121 3v8" stroke="#777" stroke-width="2"/><path d="M14 7h97M47 2v10M62 2v10" stroke="#aaa" stroke-width="1.800"/><circle cx="68" cy="7" r="4" fill="#fff" stroke="#777" stroke-width="1.200"/></svg></div>
    <div><span data-w="31">171%</span></div>
  </footer>
</main>
</div>
<script src="fit.js"></script>
</body>
</html>
```
FILE: styles.css
```css
* { box-sizing: border-box; }
body { margin: 0; width: 1920px; height: 1080px; overflow: hidden; background: #f2f1f0; font-family: "Open Sans", "Noto Sans", sans-serif; font-size: 13px; color: #3c3b37; }
.defs { position: absolute; }
span, del, ins, b { white-space: pre; }
svg { display: block; overflow: visible; }

/* shell top bar */
.topbar { height: 27px; display: grid; grid-template-columns: 89px 21px 137px 706px 1fr auto; align-items: center; padding-left: 12px; background: linear-gradient(#5a564d, #403e3a); color: #dfdbd2; font-weight: 600; font-size: 14px; }
.app-ico { width: 14px; height: 16px; margin-top: -2px; }
.caret { width: 9px; height: 5px; }
.tray { display: flex; align-items: center; padding-right: 13px; }
.tray .wifi { margin-left: 33px; }
.tray .vol { margin-left: 12px; }
.tray .bat { margin: 0 12px 0 15px; }

.desktop { display: flex; height: 1053px; }
.dock { width: 67px; background: linear-gradient(#53373d, #4c3439 45%, #3f3133); display: flex; flex-direction: column; }
.slot { position: relative; height: 64px; display: flex; align-items: center; padding-left: 9px; }
.slot:first-child { margin-top: -1px; }
.slot svg { width: 48px; height: 48px; }
.slot.run::before { content: ""; position: absolute; left: 2px; top: 29px; width: 6px; height: 6px; border-radius: 50%; background: #e95420; }
.slot.two::before { top: 25px; box-shadow: 0 8px #e95420; }
.slot.active { margin: 0 3px 0 2px; padding-left: 7px; background: #6e585d; border-radius: 4px; }
.slot.active.run::before { left: 0; }
.apps { width: 30px; height: 30px; margin: auto 0 17px 18px; }

.window { flex: 1; min-width: 0; display: flex; flex-direction: column; }
.titlebar { height: 28px; display: flex; align-items: center; justify-content: flex-end; background: linear-gradient(#3a3935, #504d46); color: #dfdbd2; font-weight: 700; font-size: 14px; }
.titlebar > span { margin: -2px 746px 0 0; }
.wm { display: flex; gap: 4px; padding-right: 5px; }
.wm i { width: 16px; height: 16px; border-radius: 50%; background: #807d76; color: #35342f; font: 700 12px/15px "DejaVu Sans", sans-serif; text-align: center; }
.wm .close { background: #e8623a; }
.menubar { height: 24px; display: flex; justify-content: space-between; background: #504d46; color: #dfdbd2; font-size: 14px; line-height: 25px; }
.menus { display: flex; gap: 12.600px; padding-left: 6px; }
.doc-close { width: 36px; background: #f2f1f0; color: #333; text-align: center; }

/* toolbars: one column per control */
.bar { display: grid; align-items: center; flex: none; padding-left: 3px; background: #f2f1f0; }
.bar > svg { width: 22px; height: 24px; }
.bar svg.dd { width: 7px; height: 4px; }
.bar .dim { opacity: .4; }
.standard { height: 39px; padding: 0 0 2px 2px; grid-template-columns: 14px 29px 13px 30px 12px 31px 14px 11px 31px 34px 32px 11px 32px 32px 29px 14px 9px 32px 9px 29px 14px 30px 14px 8px 34px 34px 31px 8px 31px 14px 33px 33px 32px 8px 33px 31px 15px 31px 9px 34px 33px 34px 31px 32px 9px 33px 32px 9px 32px 31px 14px 22px; }
.format { height: 39px; grid-template-columns: 10px 148px 33px 32px 5px 151px 77px 9px 29px 38px 33px 31px 8px 33px 33px 10px 31px 8px 31px 13px 31px 13px 8px 31px 10px 47px 5px 38px 33px 32px 32px 8px 31px 14px 33px 32px 10px 33px 22px; }
.nav { height: 39px; padding-bottom: 2px; grid-template-columns: 15px 33px 32px 33px 31px 9px 32px 34px 33px 32px 8px 33px 33px 10px 22px; }
.nav > svg { height: 22px; }
.grip { width: 3px; height: 23px; background: repeating-linear-gradient(#b4b3b0 0 3px, transparent 3px 5px); }
.sep { width: 1px; height: 29px; background: #dad9d6; }
.combo { height: 27px; border: 1px solid #a09f9c; border-radius: 4px; background: #fff; display: flex; align-items: center; padding-left: 6px; font-size: 14px; color: #4a4945; overflow: hidden; }
.combo b { margin-left: auto; width: 27px; height: 100%; border-left: 1px solid #b5b4b1; background: linear-gradient(#fdfdfd, #efeeed); display: grid; place-items: center; }
.combo .arrow { width: 11px; height: 6px; fill: #000; }
.style { width: 142px; }
.font { width: 142px; padding-left: 8px; }
.size { width: 72px; padding-left: 8px; }
.it { font-style: italic; }
.tbtn { width: 31px; height: 33px; border: 1px solid #a3a29f; border-radius: 5px; background: linear-gradient(#e4e3e1, #efeeed); display: flex; align-items: center; padding-left: 4px; }
.tbtn svg { width: 22px; height: 24px; }
.tbtn.wide { width: 43px; padding-left: 2px; }
.tbtn.wide b { margin-left: auto; height: 100%; border-left: 1px solid #b5b4b1; display: flex; align-items: center; padding-right: 1px; }
.abc { font: 700 13px "Open Sans", sans-serif; fill: #222; }
.ga { font: 700 24px "Noto Sans", sans-serif; fill: #6d7376; stroke: #33383b; stroke-width: .7; text-anchor: middle; }
.heavy { stroke-width: 1.600; }
.ita { font-family: "DejaVu Serif", serif; font-size: 23px; font-style: italic; }
.bl { fill: #6d9dd6; stroke: #2c5a9a; }
.gb { font: 700 16px "Noto Sans", sans-serif; fill: #7fa8dc; stroke: #2c5a9a; stroke-width: .6; text-anchor: middle; }
.n { font: 700 12px "Open Sans", sans-serif; fill: #3465a4; text-anchor: middle; }
.rnum { font: 10px "Open Sans", sans-serif; fill: #8a8a88; text-anchor: middle; }

.work { flex: 1; display: flex; min-height: 0; }
.editor { width: 1806px; display: flex; flex-direction: column; }
.ruler { height: 24px; }
.canvas { position: relative; flex: 1; overflow: hidden; }
.side { flex: 1; display: flex; border: 1px solid #a9a8a5; border-right: 0; margin-bottom: 1px; position: relative; }
.side::before { content: ""; position: absolute; left: -8px; top: 10px; width: 7px; height: 16px; background: #f0906c; }
.split { width: 6px; border-right: 1px solid #a9a8a5; display: flex; align-items: center; }
.split b { width: 6px; height: 73px; background: #8a8884; display: grid; place-items: center; }
.tabs { flex: 1; display: flex; flex-direction: column; align-items: center; padding-right: 1px; }
.tabs .t1 { margin-top: 14px; }
.tabs hr { width: 22px; border: 0; border-top: 1px solid #d2d1ce; margin: 11px 0 8px; }
.tabs .t3 { margin: 12px 0 9px; }
.tab-on { width: 31px; height: 32px; border: 1px solid #b3b2af; border-radius: 4px; display: grid; place-items: center; background: #eeedeb; }
.tabs .t5 { margin: 8px 0 14px; }

/* document sheet; text frames lie over each other */
.page { position: relative; margin-left: 201px; width: 1396px; height: 839px; background: #fff; box-shadow: 0 0 0 1px #bcbcba, 0 0 6px 1px #bbb; font-family: "Liberation Serif", serif; font-size: 22.800px; line-height: 27.200px; color: #000; }
.page del { color: #c69200; text-decoration: line-through 1px; }
.page ins { color: #c69200; text-decoration: underline 1px; text-underline-offset: 2px; text-decoration-skip-ink: none; }
.page .au { color: #c69200; }
.layer, .cells, .bars, .marks, .column-line { position: absolute; }
.marks { left: 0; top: 0; width: 1396px; height: 839px; }
.column-line { left: 1265px; top: 90px; width: 1px; bottom: 0; background: #000; }
.cells { left: 78px; top: 169px; width: 1318px; display: grid; grid-template-rows: 30px 30px 25px 30px 27px 27px 28px 27px 27px 27px 28px 27px 27px 27px; border: 1px solid #bdbdbd; border-width: 0 1px 2px; }
.cells i { border-top: 1px solid #bdbdbd; }
.bars { left: 61px; top: 169px; width: 1px; display: grid; grid-template-rows: 59px 52px 27px 26px 27px 26px 26px 26px 27px 26px 26px 26px 0; row-gap: 1px; }
.bars i { background: #000; }
.lno { font-family: "Liberation Sans", sans-serif; font-weight: 700; color: #8484f4; font-size: 18.200px; letter-spacing: -.4px; }
em.lno { font-size: 23px; letter-spacing: 0; }
em.sm { font-size: 18.200px; font-style: normal; letter-spacing: -.4px; }
.paper { left: 602px; top: -10px; font-size: 27.400px; }
.heads { left: 36px; top: -5.500px; line-height: 27px; }
.heads div:nth-child(2) { margin-top: 1px; }
.heads div:nth-child(4) { margin-top: -3px; }
.heads div:nth-child(5) { margin-top: 4px; }
.title { left: 334px; top: 81px; font-size: 27.400px; }
.body { left: 36px; top: 137.200px; }
.row { display: grid; grid-template-columns: 80px 560px; height: 27.200px; align-items: baseline; }
.row p { margin: 0; font-style: italic; white-space: nowrap; }
.row.in { grid-template-columns: 107px 560px; }
.row.up p { font-style: normal; font-size: 25px; }
.row.up del, .row.up ins { font-size: 24px; }
.r2 { margin-top: 1.200px; }
.r3 { margin-top: 8.800px; }
.r4 { margin-top: 1.400px; }
.r5 { margin-top: 1.600px; }
.gap { display: inline-block; width: 9px; }
.wavy { text-decoration: underline wavy #b02020 1px; text-underline-offset: 1px; }
.intro { left: 163px; top: 170px; height: 22px; overflow: hidden; font-weight: 700; font-size: 27.400px; line-height: 5px; }
.tno { left: 84px; top: 176.200px; font-size: 17.400px; font-family: "Liberation Sans", sans-serif; }
.tno > div { height: 27.200px; position: relative; }
.tno svg { position: absolute; left: 4px; top: 1px; width: 18px; height: 18px; fill: #f00; }
.big { font: 22.800px/0 "Liberation Serif", serif; }
s { font-family: "Liberation Sans", sans-serif; font-weight: 700; font-size: 18.200px; letter-spacing: -.3px; color: #c69200; text-decoration: none; background: linear-gradient(#c69200, #c69200) 0 11px / 100% 1px no-repeat; }
.x { padding-right: 50px; }
.tleft { left: 164px; top: 202px; }
.tleft > div { height: 27.200px; }
.tleft .ind { padding-left: 27px; }
.tright { left: 753px; top: 167.700px; }
.tright > div { height: 27.200px; white-space: nowrap; }
.tright > div:nth-child(-n+3) { height: 27.700px; }
.tright .para { margin-top: 5.200px; padding-left: 29px; }
.rno { left: 1362px; top: 176.200px; display: flex; flex-direction: column; }
.rno s { height: 27.200px; background-position: 0 15px; }
.c35 { left: 705px; top: 79.300px; display: grid; row-gap: 26.800px; }
.c37 { left: 675px; top: 156.200px; display: grid; line-height: 27px; }
.c37 .out { margin-left: 30px; }
.air { left: 785px; top: 80.300px; font-style: italic; line-height: 27.200px; white-space: nowrap; }
.c64 { left: 1312px; top: -10.500px; display: grid; line-height: 27.200px; }
.narrow { left: 1312px; top: 90.500px; line-height: 27px; }
.narrow > div { height: 27px; }

/* status bar */
.status { height: 21px; border-top: 1px solid #a9a8a5; display: grid; grid-template-columns: 249px 334px 251px 251px 67px 30px 41px 362px 76px 143px 49px; align-items: center; font-size: 12.500px; color: #4a4945; }
.status > div { height: 16px; display: flex; align-items: center; padding-left: 8px; border-left: 1px solid #8f8e8b; }
.status > div:nth-child(1) { border: 0; padding-left: 10px; }
.status > div:nth-child(6), .status > div:nth-child(7) { padding-left: 9px; }
.status > div:nth-child(9), .status > div:nth-child(10) { padding-left: 12px; }
.status .mid { justify-content: center; }
.status .lang { padding: 0; }
.status .sect { padding-left: 18px; }
```
FILE: fit.js
```js
// Set each run to its measured width: body runs by tracking, justified lines (.j) by word gaps.
document.querySelectorAll('[data-w]').forEach(function (el) {
  var range = document.createRange();
  range.selectNodeContents(el);
  var extra = parseFloat(el.dataset.w) - range.getBoundingClientRect().width;
  var text = el.textContent;
  if (el.classList.contains('j')) {
    el.style.wordSpacing = extra / (text.split(' ').length - 1) + 'px';
  } else {
    el.style.letterSpacing = extra / text.length + 'px';
  }
});
```
